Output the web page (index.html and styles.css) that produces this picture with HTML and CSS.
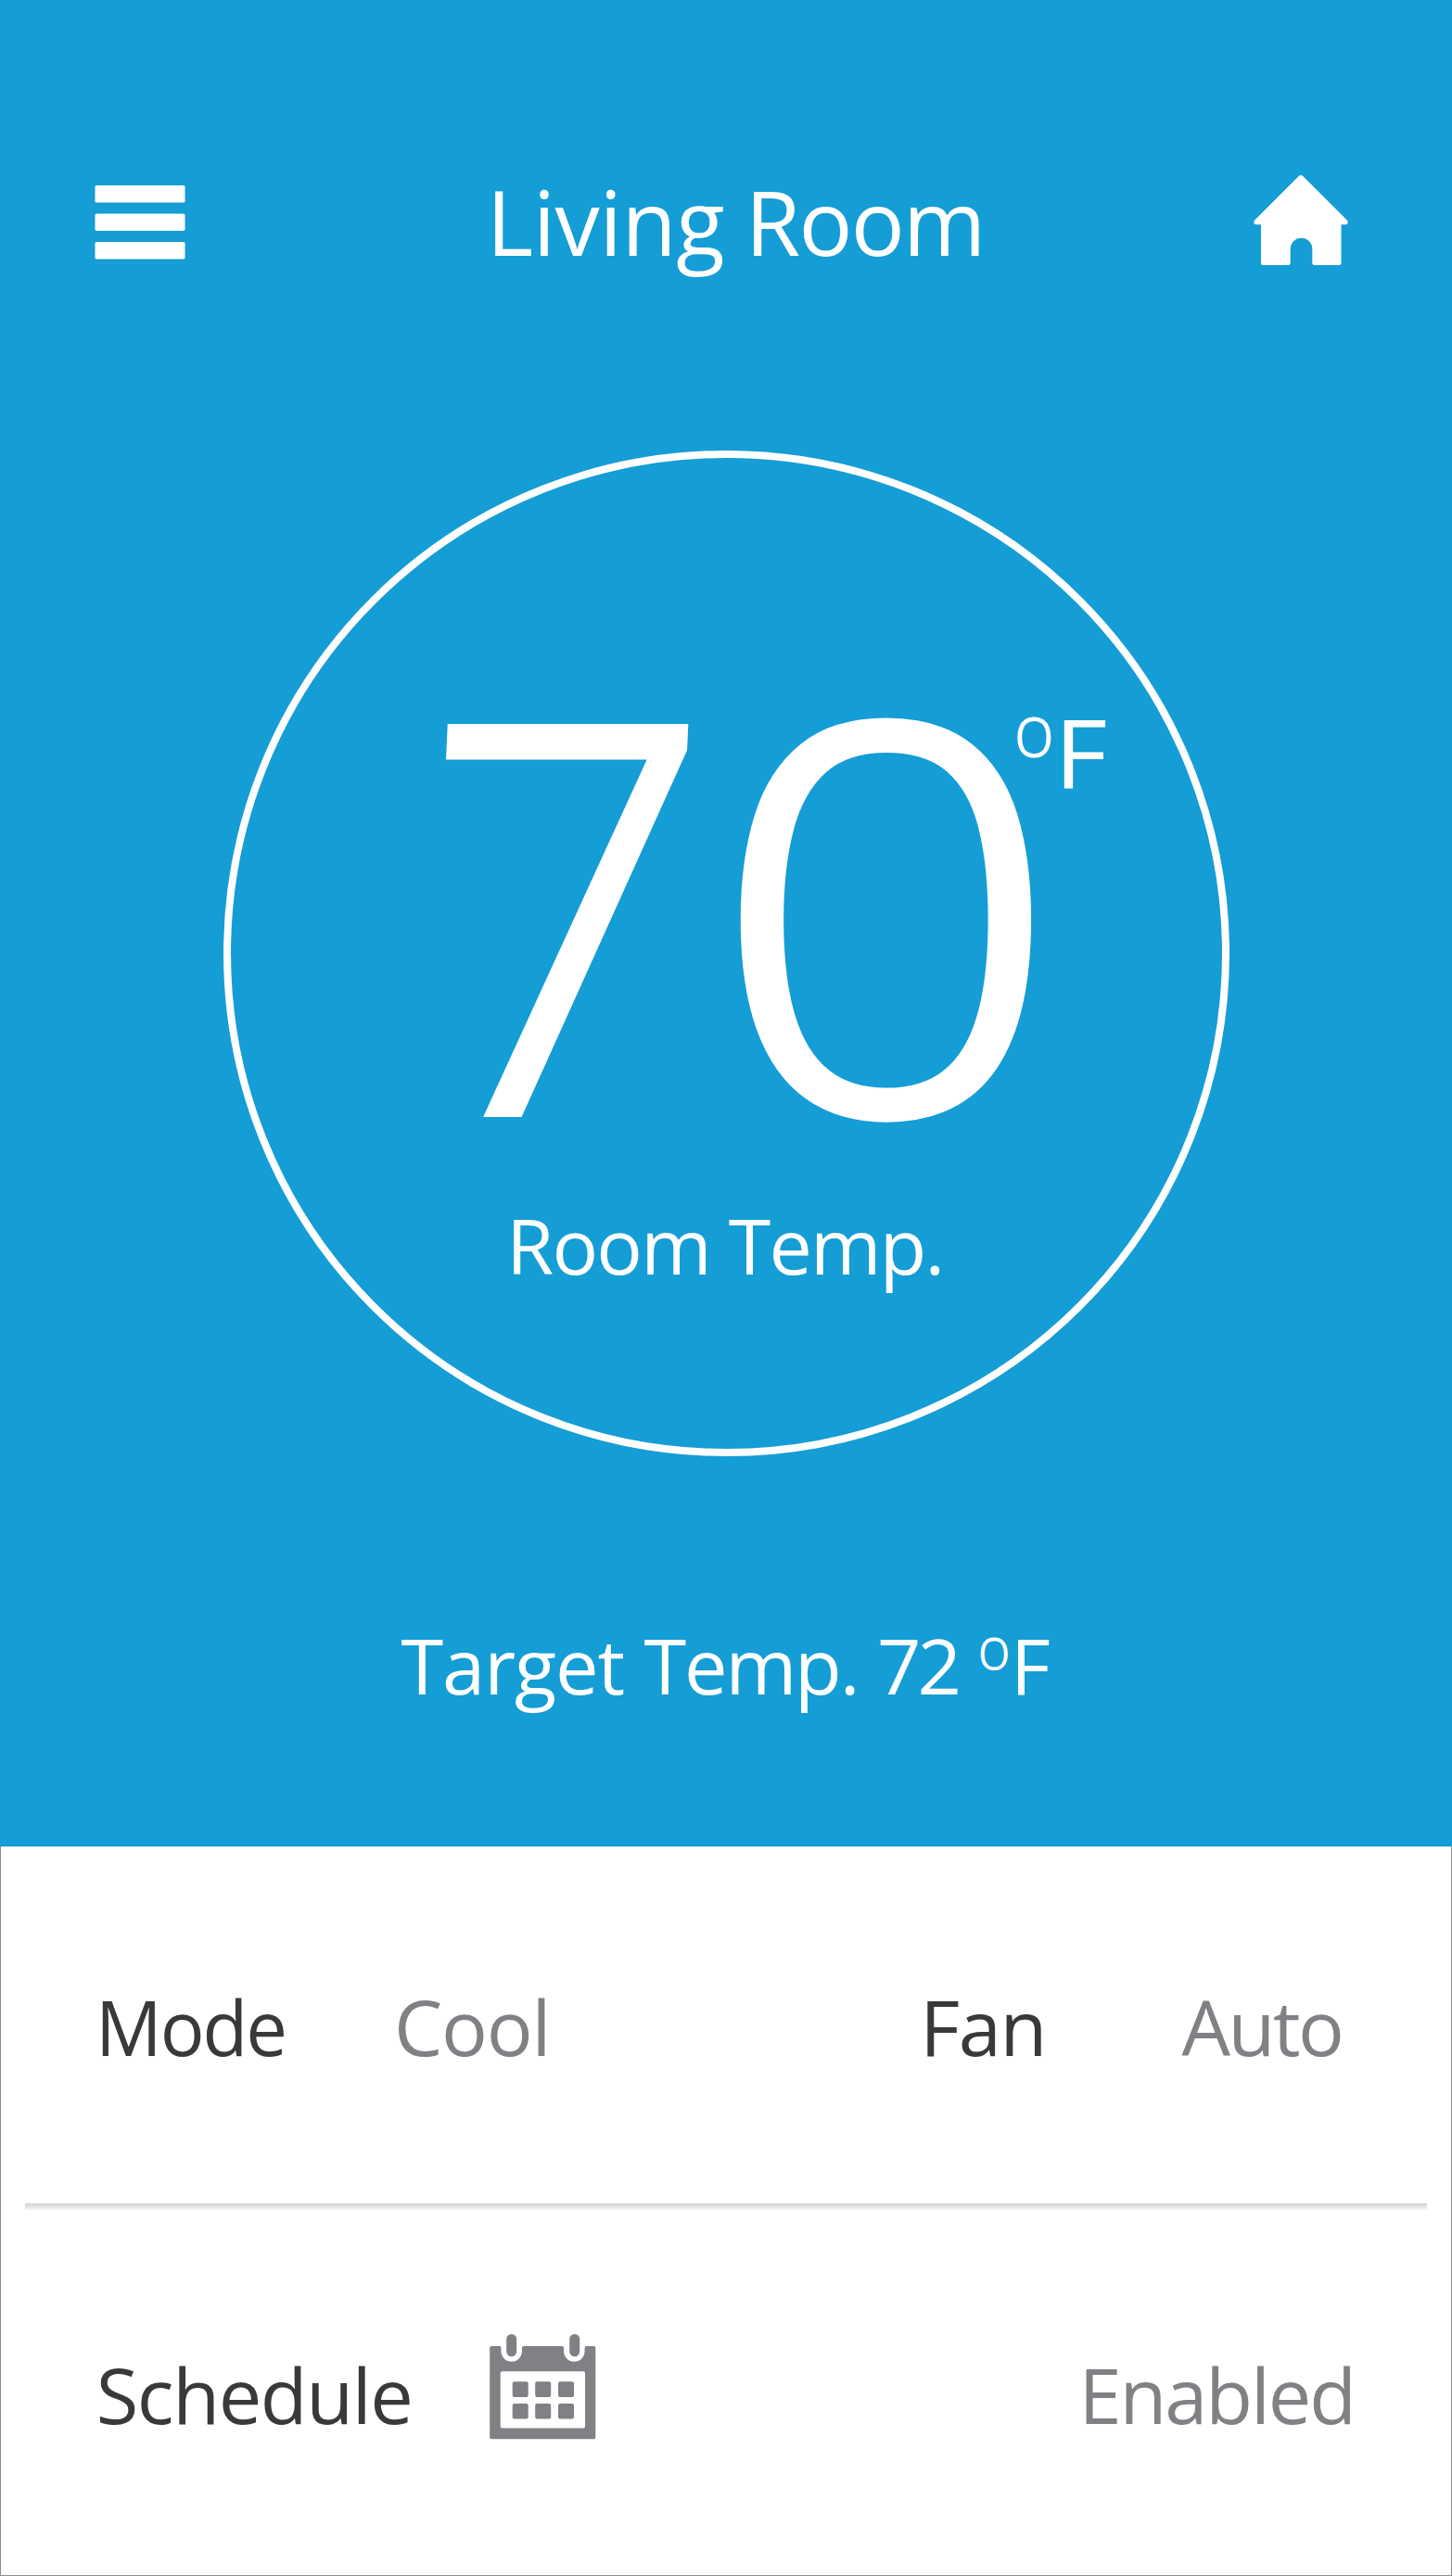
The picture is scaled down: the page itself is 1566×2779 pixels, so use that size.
FILE: index.html
```html
<!DOCTYPE html>
<html lang="en">
<head>
<meta charset="utf-8">
<title>Living Room</title>
<link rel="stylesheet" href="styles.css">
</head>
<body>
<main class="screen">
  <section class="hero">
    <header class="header">
      <svg class="menu-icon" viewBox="0 0 98 80" width="98" height="80" fill="#fff">
        <rect x="0.5" y="0" width="97" height="18.6" rx="1.5"/>
        <rect x="0.5" y="30.4" width="97" height="18.6" rx="1.5"/>
        <rect x="0.5" y="61" width="97" height="18.6" rx="1.5"/>
      </svg>
      <h1 class="title"><span class="living">Living</span> <span class="room">Room</span></h1>
      <svg class="home-icon" viewBox="0 0 102 97" width="102" height="97" fill="#fff">
        <path d="M49 .8Q51 -.8 53 .8L101 48.8Q103 52 100 53.3H94.5V95Q94.500 97 92.500 97H65.500Q63.500 97 63.300 95V79.500A11.800 11.800 0 0 0 39.700 79.500V95Q39.500 97 37.500 97H10Q8 97 8 95V53.300H2.500Q-1 52 1 48.800Z"/>
      </svg>
    </header>
    <div class="dial">
      <div class="reading">
        <span class="seven">7</span><span class="zero">0</span><span class="degree">O</span><span class="unit">F</span>
      </div>
      <p class="caption"><span class="room">Room</span> <span class="temp">Temp.</span></p>
    </div>
    <p class="target">
      <span class="word-target">Target</span> <span class="word-temp">Temp.</span> <span class="value">72</span> <span class="degree">O</span><span>F</span>
    </p>
  </section>
  <section class="panel">
    <div class="row row-mode">
      <span class="mode">Mode</span><span class="muted cool">Cool</span><span class="fan">Fan</span><span class="muted auto">Auto</span>
    </div>
    <div class="divider"></div>
    <div class="row row-schedule">
      <span class="schedule">Schedule</span>
      <svg class="calendar-icon" viewBox="0 0 115 114" width="115" height="114" fill="#808184">
        <path fill-rule="evenodd" d="M2 13H11Q12.400 13 12.400 15V18.500A11.300 11.300 0 0 0 35 18.500V15Q35 13 37 13H78Q80 13 80 15V18.500A11.300 11.300 0 0 0 102.600 18.500V15Q102.600 13 104.500 13H112.500Q114.300 13 114.300 15V111.500Q114.300 113.300 112.500 113.300H2Q.2 113.300 .2 111.500V15Q.2 13 2 13ZM13.500 40.300Q11.700 40.300 11.700 42V99.700Q11.700 101.400 13.500 101.400H101.300Q103 101.400 103 99.700V42Q103 40.300 101.300 40.300Z"/>
        <rect x="18.200" y="0" width="11" height="24.300" rx="5.500"/>
        <rect x="86.200" y="0" width="11" height="24.300" rx="5.500"/>
        <rect x="24.700" y="51.300" width="17" height="16.600" rx="2"/>
        <rect x="49.200" y="51.300" width="17" height="16.600" rx="2"/>
        <rect x="74" y="51.300" width="17" height="16.600" rx="2"/>
        <rect x="24.700" y="75" width="17" height="16.600" rx="2"/>
        <rect x="49.200" y="75" width="17" height="16.600" rx="2"/>
        <rect x="74" y="75" width="17" height="16.600" rx="2"/>
      </svg>
      <span class="muted enabled">Enabled</span>
    </div>
  </section>
</main>
</body>
</html>
```
FILE: styles.css
```css
* { box-sizing: border-box; margin: 0; padding: 0; }
body { background: #fff; }
.screen {
  width: 1566px;
  height: 2779px;
  display: flex;
  flex-direction: column;
  overflow: hidden;
  font: 400 83px/100px "Open Sans", sans-serif;
  color: #39393b;
}
.hero { height: 1991.5px; padding-top: 168.5px; background: #159dd5; color: #fff; }

.header {
  display: grid;
  grid-template-columns: 422.7px 827.3px 102px;
  padding-left: 102px;
  height: 140px;
  align-items: start;
}
.menu-icon { margin-top: 31.5px; }
.home-icon { margin-top: 20.5px; display: block; }
.title {
  display: grid;
  grid-template-columns: 279px auto;
  font-size: 96.5px;
  font-weight: 400;
  line-height: 140px;
}
.title .living { letter-spacing: -.4px; }
.title .room { letter-spacing: -1.8px; }

.dial {
  width: 1085px;
  height: 1085px;
  margin: 177.5px 0 0 240.5px;
  padding-top: 181px;
  border: 8px solid #fff;
  border-radius: 50%;
}
.reading {
  display: grid;
  grid-template-columns: 308.4px 326.4px 43px auto;
  height: 600px;
  padding-left: 211.2px;
  align-items: start;
  justify-content: start;
}
.reading span { transform-origin: 0 50%; }
.seven, .zero {
  font-size: 577px;
  font-weight: 300;
  line-height: 600px;
  -webkit-text-stroke: 12px #fff;
}
.reading .seven { transform: skewX(-2.6deg) scaleX(.932); transform-origin: 0 106px; }
.zero { transform: scaleX(1.14); }
.reading .degree { margin-top: 78.5px; font-size: 61px; line-height: 80px; transform: scaleX(.9); }
.unit { margin-top: 84.5px; font-size: 103px; transform: scaleX(1.08); }
.caption {
  display: grid;
  grid-template-columns: 239.5px auto;
  padding-left: 297.8px;
  margin-top: 18px;
  font-size: 82.6px;
}
.caption .room { letter-spacing: -1.8px; }
.caption .temp { letter-spacing: -1.8px; }

.target {
  display: grid;
  grid-template-columns: 262px 251.5px 109px 35px auto;
  padding-left: 432.5px;
  margin-top: 174.5px;
}
.word-target { letter-spacing: -1.1px; }
.word-temp { letter-spacing: -2.2px; }
.value { letter-spacing: -4px; }
.target .degree {
  margin-top: 7px;
  font-size: 49px;
  line-height: 60px;
  transform: scaleX(.9);
  transform-origin: 0 50%;
}

.panel {
  height: 787.5px;
  border: 1px solid #8c8c8f;
  border-top: 0;
  padding-top: 144.8px;
}
.row { display: grid; height: 100px; align-items: start; }
.muted { color: #808184; }
.row-mode {
  grid-template-columns: 322.4px 567.4px 282.3px auto;
  padding-left: 101.5px;
}
.mode { letter-spacing: -2.1px; transform: scaleX(.96); transform-origin: 0 50%; }
.cool { letter-spacing: -1.2px; }
.fan { letter-spacing: -1.4px; }
.auto { letter-spacing: -2.5px; }
.divider {
  height: 7px;
  margin: 140.7px 26px 149.3px 25.5px;
  background: linear-gradient(#d0d3d1, #f5f5f5);
}
.row-schedule {
  grid-template-columns: 424px 635.8px auto;
  padding-left: 102.7px;
}
.schedule { letter-spacing: -1.4px; }
.calendar-icon { margin-top: -15.5px; overflow: visible; }
.enabled { letter-spacing: -2.1px; }
```
